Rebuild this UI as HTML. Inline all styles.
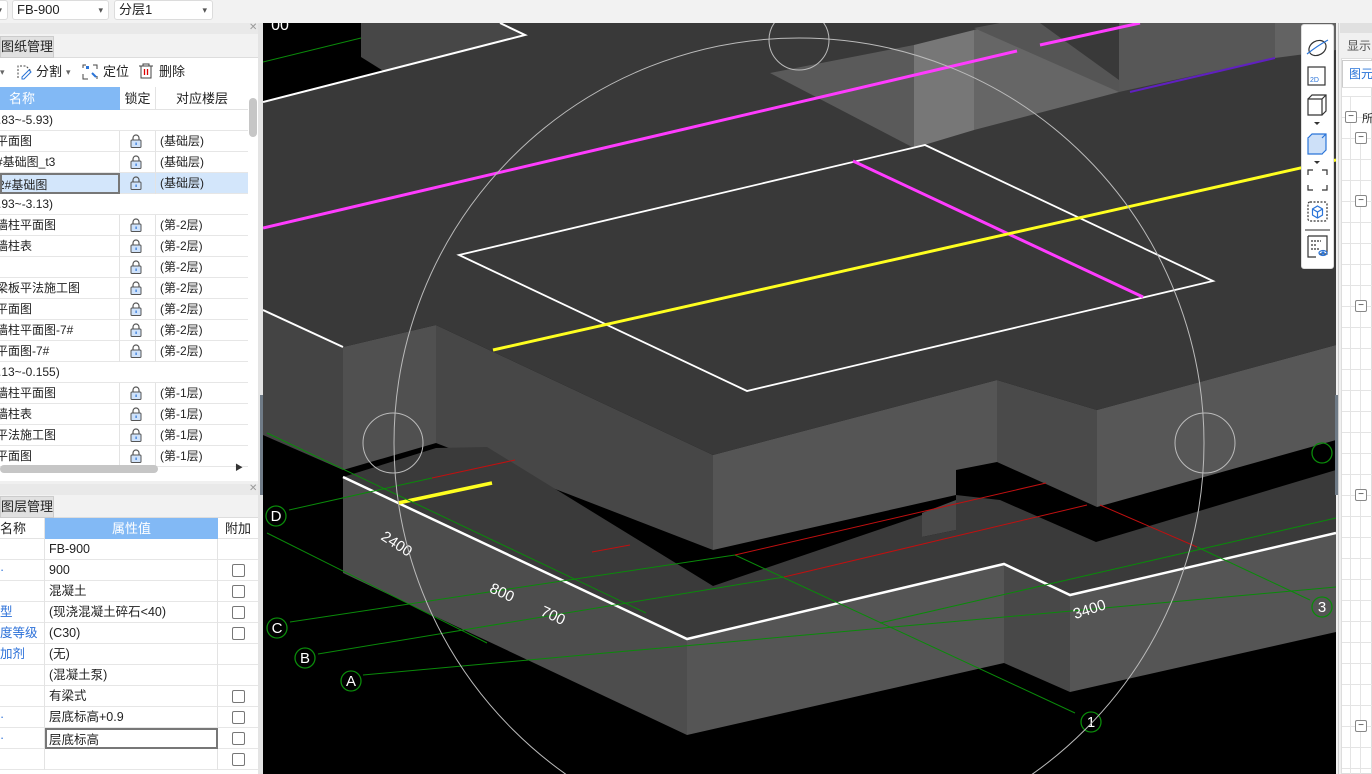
<!DOCTYPE html>
<html><head><meta charset="utf-8">
<style>
*{margin:0;padding:0;box-sizing:border-box}
html,body{width:1372px;height:774px;overflow:hidden}
body{background:#f0f0f0;font-family:"Liberation Sans","Noto Sans CJK SC",sans-serif;font-size:12px;color:#222;position:relative}
#wrap{position:absolute;left:0;top:0;width:1372px;height:774px;overflow:hidden}
.abs{position:absolute;white-space:nowrap}
.combo{position:absolute;top:0;height:20px;background:#fff;border:1px solid #dcdcdc;border-radius:3px;font-size:13px;line-height:18px;padding-left:4px}
.combo:after{content:"▾";position:absolute;right:5px;top:0;font-size:9px;color:#555}
.row{position:absolute;left:0;height:21px;border-bottom:1px solid #e6e6e6;line-height:20px;font-size:12px;white-space:nowrap}
.cell{position:absolute;top:0;height:21px;border-right:1px solid #e3e3e3;padding-left:4px;white-space:nowrap;overflow:hidden}
.lock{position:absolute;left:130px;top:3px;width:12px;height:14px}
.cb{position:absolute;left:232px;top:4px;width:13px;height:13px;border:1px solid #777;border-radius:2px;background:#fff}
</style></head><body><div id="wrap">

<div class="abs" style="left:0;top:0;width:1372px;height:23px;background:#f2f2f2"></div>
<div class="combo" style="left:-6px;width:14px;top:0"></div>
<div class="combo" style="left:12px;width:97px">FB-900</div>
<div class="combo" style="left:114px;width:99px">分层1</div>

<div class="abs" style="left:0;top:23px;width:258px;height:458px;background:#fff"></div>
<div class="abs" style="left:0;top:23px;width:260px;height:11px;background:#e9e9e9"></div>
<div class="abs" style="left:249px;top:22px;font-size:10px;color:#999">✕</div>
<div class="abs" style="left:0;top:34px;width:260px;height:24px;background:#f2f2f2;border-bottom:1px solid #ddd"></div>
<div class="abs" style="left:0;top:36px;width:54px;height:22px;background:#e1e1e1;border:1px solid #ccc;font-size:13px;line-height:20px;overflow:hidden">图纸管理</div>
<div class="abs" style="left:0;top:58px;width:258px;height:28px;background:#fff;font-size:13px;line-height:28px">
 <span class="abs" style="left:0;font-size:9px;color:#666">▾</span>
 <svg class="abs" style="left:16px;top:6px" width="16" height="16"><path d="M2 14V2h8l4 4v3" fill="none" stroke="#444" stroke-dasharray="2 1.5"/><path d="M6 13l7-7 2 2-7 7H6z" fill="none" stroke="#2a74d8"/></svg>
 <span class="abs" style="left:36px">分割</span><span class="abs" style="left:66px;font-size:9px;color:#666">▾</span>
 <svg class="abs" style="left:82px;top:6px" width="17" height="16"><path d="M1 4V1h3M1 10v5h5M15 15v-3M11 1h4v4" fill="none" stroke="#444"/><rect x="4" y="2" width="3" height="3" fill="#2a74d8"/><path d="M10 9l4 4" stroke="#2a74d8" stroke-width="2"/></svg>
 <span class="abs" style="left:103px">定位</span>
 <svg class="abs" style="left:138px;top:5px" width="16" height="17"><path d="M1 3h14M5 3V1h6v2M3 3v12h10V3" fill="none" stroke="#444"/><path d="M6.5 6v6M9.5 6v6" stroke="#d00" stroke-width="1.3"/></svg>
 <span class="abs" style="left:159px">删除</span>
</div>
<div class="abs" style="left:0;top:87px;width:120px;height:23px;background:#82b9f5;color:#fff;font-size:13px;line-height:23px;padding-left:9px">名称</div>
<div class="abs" style="left:120px;top:87px;width:36px;height:23px;border-right:1px solid #e3e3e3;font-size:13px;line-height:23px;text-align:center;border-bottom:1px solid #e3e3e3">锁定</div>
<div class="abs" style="left:156px;top:87px;width:92px;height:23px;font-size:13px;line-height:23px;text-align:center;border-bottom:1px solid #e3e3e3">对应楼层</div>
<div id="rows1"></div>
<div class="abs" style="left:249px;top:98px;width:8px;height:39px;background:#c6c6c6;border-radius:4px"></div>
<div class="abs" style="left:0;top:465px;width:158px;height:8px;background:#c6c6c6;border-radius:4px"></div>
<div class="abs" style="left:235px;top:462px;font-size:8px;color:#333">▶</div>

<div class="abs" style="left:0;top:481px;width:260px;height:3px;background:#f0f0f0"></div>
<div class="abs" style="left:0;top:484px;width:260px;height:11px;background:#e9e9e9"></div>
<div class="abs" style="left:249px;top:483px;font-size:10px;color:#999">✕</div>
<div class="abs" style="left:0;top:495px;width:260px;height:23px;background:#f2f2f2;border-bottom:1px solid #ddd"></div>
<div class="abs" style="left:0;top:496px;width:54px;height:22px;background:#e1e1e1;border:1px solid #ccc;font-size:13px;line-height:20px;overflow:hidden">图层管理</div>
<div class="abs" style="left:0;top:518px;width:258px;height:256px;background:#fff"></div>
<div class="abs" style="left:0;top:518px;width:45px;height:21px;font-size:13px;line-height:21px;border-right:1px solid #e3e3e3;border-bottom:1px solid #e3e3e3">名称</div>
<div class="abs" style="left:45px;top:518px;width:173px;height:21px;background:#82b9f5;color:#fff;font-size:13px;line-height:21px;text-align:center">属性值</div>
<div class="abs" style="left:218px;top:518px;width:40px;height:21px;font-size:13px;line-height:21px;text-align:center;border-bottom:1px solid #e3e3e3">附加</div>
<div id="rows2"></div>

<div class="abs" style="left:258px;top:23px;width:5px;height:751px;background:#e4e4e4"></div>
<div class="abs" style="left:260px;top:395px;width:3px;height:100px;background:#6f7b87"></div>

<svg class="abs" style="left:0;top:0" width="1372" height="774">
<defs><clipPath id="vp"><rect x="263" y="23" width="1073" height="751"/></clipPath></defs>
<g clip-path="url(#vp)">
<rect x="263" y="23" width="1073" height="751" fill="#000"/>
<polygon points="263,102 525,35 500,23 1336,23 1336,345 1097,410 997,380 713,455 436,325 343,347 263,310" fill="#393939"/>
<polygon points="263,23 361,23 361,57 385,72 263,102" fill="#000"/>
<polygon points="361,23 500,23 525,35 385,72 361,57" fill="#474747"/>
<polygon points="770,73 914,45 914,148" fill="#5a5a5a"/>
<polygon points="914,45 974,30 974,130 914,148" fill="#777"/>
<polygon points="974,30 1000,23 1119,85 1119,92 974,130" fill="#666"/>
<polygon points="974,28 1000,23 1040,23 1119,80 1119,92" fill="#555"/>
<polygon points="1119,23 1275,23 1275,58 1119,92" fill="#575757"/>
<polygon points="1275,23 1336,23 1336,50 1275,58" fill="#636363"/>
<polygon points="343,347 436,325 436,443 343,470" fill="#505050"/>
<polygon points="263,310 343,347 343,470 263,435" fill="#444"/>
<polygon points="436,325 713,455 713,550 436,443" fill="#474747"/>
<polygon points="713,455 997,380 997,462 956,470 956,495 713,550" fill="#555"/>
<polygon points="997,380 1097,410 1097,507 997,462" fill="#4a4a4a"/>
<polygon points="1097,410 1336,345 1336,440 1097,507" fill="#575757"/>
<polygon points="343,477 436,448 487,447 713,586 922,515 922,537 956,530 956,495 1000,500 1096,542 1336,470 1336,533 1070,595 1004,564 687,639" fill="#3a3a3a"/>
<polygon points="922,513 956,500 956,530 922,537" fill="#4a4a4a"/>
<polygon points="343,477 687,639 687,735 343,573" fill="#4d4d4d"/>
<polygon points="687,639 1004,564 1004,663 687,735" fill="#555"/>
<polygon points="1004,564 1070,595 1070,692 1004,663" fill="#484848"/>
<polygon points="1070,595 1336,533 1336,632 1070,692" fill="#555"/>
<g fill="none" stroke="#fff" stroke-width="2">
<polyline points="263,102 525,35 500,23"/>
<polyline points="263,310 343,347"/>
<polygon points="459,255 925,145 1213,281 747,391" stroke-width="1.8"/>
<polyline points="343,477 687,639 1004,564 1070,595 1336,533" stroke-width="2.5"/>
</g>
<g stroke-width="3" fill="none">
<line x1="263" y1="228" x2="1017" y2="51" stroke="#ff3cff"/>
<line x1="1040" y1="45" x2="1140" y2="23" stroke="#ff3cff"/>
<line x1="853" y1="161" x2="1143" y2="297" stroke="#ff3cff"/>
<line x1="1130" y1="92" x2="1275" y2="58" stroke="#6020c0" stroke-width="2"/>
<line x1="493" y1="350" x2="1336" y2="160" stroke="#ffff20"/>
<line x1="398" y1="503" x2="492" y2="483" stroke="#ffff20" stroke-width="3.5"/>
</g>
<g stroke="#0a8a0a" stroke-width="1" fill="none">
<line x1="263" y1="62" x2="361" y2="38"/>
<line x1="289" y1="510" x2="432" y2="478"/>
<line x1="267" y1="433" x2="646" y2="613"/>
<line x1="267" y1="533" x2="487" y2="643"/>
<line x1="290" y1="622" x2="735" y2="555"/>
<line x1="318" y1="654" x2="784" y2="577"/>
<line x1="363" y1="675" x2="1336" y2="587"/>
<line x1="880" y1="623" x2="1336" y2="518"/>
<line x1="735" y1="555" x2="1075" y2="713"/>
<line x1="1197" y1="547" x2="1310" y2="600"/>
</g>
<g stroke="#c01010" stroke-width="1" fill="none">
<line x1="432" y1="478" x2="515" y2="460"/>
<line x1="735" y1="555" x2="1046" y2="483"/>
<line x1="784" y1="577" x2="1087" y2="505"/>
<line x1="1197" y1="547" x2="1100" y2="505"/>
<line x1="592" y1="552" x2="630" y2="545"/>
</g>
<g fill="none" stroke="#0a8a0a" stroke-width="1.3">
<circle cx="276" cy="516" r="10"/><circle cx="277" cy="628" r="10"/><circle cx="305" cy="658" r="10"/><circle cx="351" cy="681" r="10"/><circle cx="1091" cy="722" r="10"/><circle cx="1322" cy="607" r="10"/><circle cx="1322" cy="453" r="10"/>
</g>
<g fill="#fff" font-size="15" font-family="Liberation Sans,sans-serif" text-anchor="middle">
<text x="276" y="521">D</text><text x="277" y="633">C</text><text x="305" y="663">B</text><text x="351" y="686">A</text><text x="1091" y="727">1</text><text x="1322" y="612">3</text>
<text x="280" y="30" font-size="16">00</text>
<text transform="translate(394,548) rotate(33)">2400</text>
<text transform="translate(500,597) rotate(25)">800</text>
<text transform="translate(551,620) rotate(25)">700</text>
<text transform="translate(1091,614) rotate(-18)">3400</text>
</g>
<g fill="none" stroke="#bbb" stroke-width="1">
<circle cx="799" cy="443" r="405"/>
<circle cx="393" cy="443" r="30"/><circle cx="1205" cy="443" r="30"/><circle cx="799" cy="40" r="30"/>
</g>
</g>
</svg>
<div class="abs" style="left:1335px;top:395px;width:3px;height:100px;background:#6f7b87"></div>

<div class="abs" style="left:1301px;top:24px;width:33px;height:245px;background:#fff;border:1px solid #ddd;border-radius:3px"></div>
<svg class="abs" style="left:1301px;top:24px" width="33" height="245" fill="none" stroke="#2a74d8" stroke-width="1.2">
<ellipse cx="16.5" cy="24" rx="9" ry="7" transform="rotate(-30 16.5 24)" stroke="#333"/>
<path d="M6 30 Q16 22 27 16" />
<rect x="7" y="43" width="17" height="18" stroke="#333"/><text x="9" y="58" font-size="7" fill="#2a74d8" stroke="none" font-family="Liberation Sans">2D</text>
<path d="M7 75h14v16H7zM7 75l4-4h14v16l-4 4M21 75l4-4" stroke="#333"/>
<path d="M13 98l3 3 3-3z" fill="#333" stroke="none"/>
<path d="M7 114h14v16H7z" fill="#cde0f8"/><path d="M7 114l4-4h14v16l-4 4M21 114l4-4" fill="#cde0f8"/>
<path d="M13 137l3 3 3-3z" fill="#333" stroke="none"/>
<path d="M7 151v-5h5M21 146h5v5M26 161v5h-5M12 166H7v-5" stroke="#333"/>
<rect x="7" y="178" width="19" height="19" rx="2" stroke="#333" stroke-dasharray="2 1.5"/>
<path d="M16.5 182l5 3v6l-5 3-5-3v-6zM11.5 185l5 3 5-3M16.5 188v6"/>
<line x1="4" y1="206" x2="29" y2="206" stroke="#555"/>
<path d="M7 212h19v18h-8M7 212v21h8" stroke="#333"/><path d="M10 217h10M10 221h6M10 225h8" stroke="#333" stroke-dasharray="2 1"/>
<ellipse cx="22" cy="229" rx="4" ry="2.5"/><circle cx="22" cy="229" r="1" fill="#2a74d8"/>
</svg>

<div class="abs" style="left:1338px;top:23px;width:34px;height:751px;background:#f0f0f0;border-left:1px solid #ccc"></div>
<div class="abs" style="left:1340px;top:23px;width:32px;height:10px;background:#e0e0e0"></div>
<div class="abs" style="left:1347px;top:37px;font-size:12px;color:#555">显示</div>
<div class="abs" style="left:1341px;top:58px;width:31px;height:716px;background:#fff;border:1px solid #ddd"></div>
<div class="abs" style="left:1342px;top:60px;width:30px;height:27px;border-left:1px solid #ccc;border-top:1px solid #ccc;background:#fff;font-size:12px;color:#2a74d8;padding:4px 0 0 6px;overflow:hidden">图元</div>
<div class="abs" style="left:1342px;top:87px;width:30px;height:1px;background:#ddd"></div>
<div id="rp"></div>

<script>
var r1=[[".83~-5.93)","",0],["平面图","(基础层)",1],["#基础图_t3","(基础层)",1],["2#基础图","(基础层)",2],[".93~-3.13)","",0],["墙柱平面图","(第-2层)",1],["墙柱表","(第-2层)",1],["","(第-2层)",1],["梁板平法施工图","(第-2层)",1],["平面图","(第-2层)",1],["墙柱平面图-7#","(第-2层)",1],["平面图-7#","(第-2层)",1],[".13~-0.155)","",0],["墙柱平面图","(第-1层)",1],["墙柱表","(第-1层)",1],["平法施工图","(第-1层)",1],["平面图","(第-1层)",1]];
var lock='<svg class="lock" viewBox="0 0 12 14"><path d="M3 6V4a3 3 0 016 0v2" fill="none" stroke="#555" stroke-width="1.2"/><rect x="1" y="6" width="10" height="7.5" rx="1" fill="#cfe2fa" stroke="#555"/><rect x="5.5" y="8.5" width="1.2" height="2.5" fill="#2a74d8"/></svg>';
var h="";
r1.forEach(function(r,i){var y=110+i*21;
 if(r[2]==0){h+='<div class="row" style="top:'+y+'px;width:248px"><span style="position:absolute;left:-2px">'+r[0]+'</span></div>';}
 else{var sel=r[2]==2;
 h+='<div class="row" style="top:'+y+'px;width:248px;'+(sel?'background:#d3e6fb':'')+'"><div class="cell" style="left:0;width:120px;padding-left:0;'+(sel?'border:2px solid #777;background:#d3e6fb':'')+'"><span style="position:absolute;left:-4px">'+r[0]+'</span></div><div class="cell" style="left:120px;width:36px"></div>'+lock+'<div class="cell" style="left:156px;width:92px;border:none">'+r[1]+'</div></div>';}
});
document.getElementById("rows1").innerHTML=h;
var r2=[["","FB-900",0],["·","900",1],["","混凝土",1],["型","(现浇混凝土碎石<40)",1],["度等级","(C30)",1],["加剂","(无)",0],["","(混凝土泵)",0],["","有梁式",1],["·","层底标高+0.9",1],["·","层底标高",1],["","",1]];
h="";
r2.forEach(function(r,i){var y=539+i*21;
 h+='<div class="row" style="top:'+y+'px;width:258px;font-size:12.5px"><div class="cell" style="left:0;width:45px;padding-left:0;color:#2a6fd8">'+r[0]+'</div><div class="cell" style="left:45px;width:173px;'+(i==9?'border:2px solid #777;padding-left:2px':'')+'">'+r[1].replace("<","&lt;")+'</div>'+(r[2]?'<div class="cb"></div>':'')+'</div>';
});
document.getElementById("rows2").innerHTML=h;
h="";
for(var y=96;y<770;y+=21){h+='<div class="abs" style="left:1342px;top:'+y+'px;width:30px;height:1px;background:#e4e4e4"></div>';}
h+='<div class="abs" style="left:1350px;top:96px;width:1px;height:678px;background:#e4e4e4"></div><div class="abs" style="left:1360px;top:140px;width:1px;height:634px;background:#e4e4e4"></div>';
[[1345,111],[1355,132],[1355,195],[1355,300],[1355,489],[1355,720]].forEach(function(p){h+='<div class="abs" style="left:'+p[0]+'px;top:'+p[1]+'px;width:12px;height:12px;border:1px solid #888;border-radius:2px;background:#fff;font-size:10px;line-height:9px;text-align:center;color:#333">−</div>';});
h+='<div class="abs" style="left:1362px;top:110px;font-size:11px">所</div>';
document.getElementById("rp").innerHTML=h;
</script>
</div></body></html>
